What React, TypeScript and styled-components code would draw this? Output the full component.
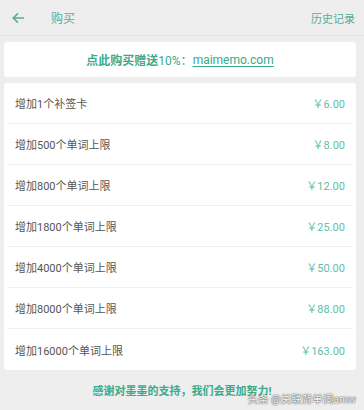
import React from 'react';
import styled, { createGlobalStyle } from 'styled-components';

type Item = {
  name: string;
  price: string;
};

const items: Item[] = [
  { name: '增加1个补签卡', price: '￥6.00' },
  { name: '增加500个单词上限', price: '￥8.00' },
  { name: '增加800个单词上限', price: '￥12.00' },
  { name: '增加1800个单词上限', price: '￥25.00' },
  { name: '增加4000个单词上限', price: '￥50.00' },
  { name: '增加8000个单词上限', price: '￥88.00' },
  { name: '增加16000个单词上限', price: '￥163.00' },
];

const GlobalStyle = createGlobalStyle`
  html, body {
    margin: 0;
    padding: 0;
    background: #eeeeee;
  }
  body {
    font-family: Roboto, "Noto Sans CJK SC", sans-serif;
  }
`;

const Page = styled.div`
  position: relative;
  width: 364px;
  height: 410px;
  overflow: hidden;
  background: #eeeeee;
`;

const Header = styled.div`
  height: 35px;
  display: flex;
  align-items: center;
  padding: 0 9px 0 11px;
  border-bottom: 1px solid #e3e3e3;
  color: #56ad98;
`;

const BackButton = styled.div`
  width: 14px;
  height: 14px;
  display: flex;
  align-items: center;
  justify-content: center;
`;

const Title = styled.div`
  margin-left: 26px;
  font-size: 12px;
  flex: 1;
`;

const HeaderAction = styled.div`
  font-size: 11px;
`;

const Content = styled.div`
  padding: 6px 8px 0 4px;
  display: flex;
  flex-direction: column;
  gap: 6px;
`;

const Card = styled.div`
  background: #ffffff;
  border-radius: 3px;
`;

const Banner = styled(Card)`
  height: 35px;
  display: flex;
  align-items: center;
  justify-content: center;
  font-size: 12px;
  color: #3aa98c;
`;

const Strong = styled.span`
  font-weight: 700;
`;

const Link = styled.span`
  text-decoration: underline;
  text-underline-offset: 2px;
`;

const Row = styled.div`
  height: 41px;
  box-sizing: border-box;
  display: flex;
  align-items: center;
  justify-content: space-between;
  padding: 0 8px;
  margin: 0 3px;
  border-bottom: 1px solid #f0f0f0;
  font-size: 11px;

  &:last-child {
    border-bottom: none;
  }
`;

const RowName = styled.span`
  color: #555555;
`;

const Price = styled.span`
  color: #62bfa8;
`;

const Footer = styled.div`
  margin-top: 12px;
  text-align: center;
  font-size: 11px;
  font-weight: 700;
  color: #3aa98c;
`;

const Watermark = styled.div`
  position: absolute;
  right: 8px;
  bottom: 4px;
  font-size: 10.5px;
  color: #f6f6f6;
  text-shadow: 0 0 1px #444, 0 0 2px #666;
`;

const App: React.FC = () => {
  return (
    <Page>
      <GlobalStyle />
      <Header>
        <BackButton>
          <svg width="14" height="14" viewBox="0 0 24 24" fill="none" stroke="#56ad98" strokeWidth="2.6" strokeLinecap="square">
            <path d="M21 12H4" />
            <path d="M11 5l-7 7 7 7" />
          </svg>
        </BackButton>
        <Title>购买</Title>
        <HeaderAction>历史记录</HeaderAction>
      </Header>
      <Content>
        <Banner>
          <Strong>点此购买赠送</Strong>10%：<Link>maimemo.com</Link>
        </Banner>
        <Card>
          {items.map((item) => (
            <Row key={item.name}>
              <RowName>{item.name}</RowName>
              <Price>{item.price}</Price>
            </Row>
          ))}
        </Card>
      </Content>
      <Footer>感谢对墨墨的支持，我们会更加努力!</Footer>
      <Watermark>头条 @关联背单词amw</Watermark>
    </Page>
  );
};

export default App;
